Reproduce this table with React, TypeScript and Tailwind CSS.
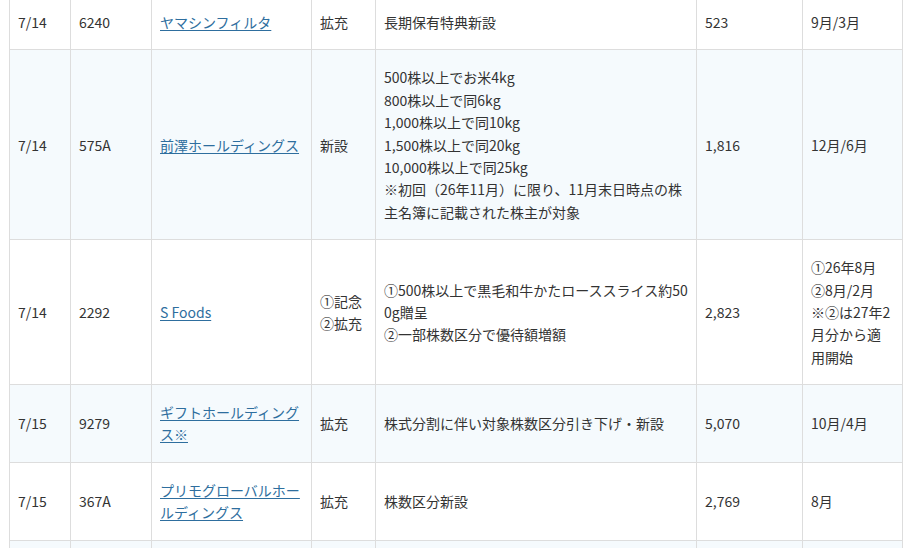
import React from "react";

type Row = {
  date: string;
  code: string;
  name: string;
  kind: React.ReactNode;
  detail: React.ReactNode;
  price: string;
  month: React.ReactNode;
};

const rows: Row[] = [
  {
    date: "7/14",
    code: "6240",
    name: "ヤマシンフィルタ",
    kind: "拡充",
    detail: "長期保有特典新設",
    price: "523",
    month: "9月/3月",
  },
  {
    date: "7/14",
    code: "575A",
    name: "前澤ホールディングス",
    kind: "新設",
    detail: (
      <>
        500株以上でお米4kg
        <br />
        800株以上で同6kg
        <br />
        1,000株以上で同10kg
        <br />
        1,500株以上で同20kg
        <br />
        10,000株以上で同25kg
        <br />
        ※初回（26年11月）に限り、11月末日時点の株主名簿に記載された株主が対象
      </>
    ),
    price: "1,816",
    month: "12月/6月",
  },
  {
    date: "7/14",
    code: "2292",
    name: "S Foods",
    kind: (
      <>
        ①記念
        <br />
        ②拡充
      </>
    ),
    detail: (
      <>
        ①500株以上で黒毛和牛かたローススライス約500g贈呈
        <br />
        ②一部株数区分で優待額増額
      </>
    ),
    price: "2,823",
    month: (
      <>
        ①26年8月
        <br />
        ②8月/2月
        <br />
        ※②は27年2月分から適用開始
      </>
    ),
  },
  {
    date: "7/15",
    code: "9279",
    name: "ギフトホールディングス※",
    kind: "拡充",
    detail: "株式分割に伴い対象株数区分引き下げ・新設",
    price: "5,070",
    month: "10月/4月",
  },
  {
    date: "7/15",
    code: "367A",
    name: "プリモグローバルホールディングス",
    kind: "拡充",
    detail: "株数区分新設",
    price: "2,769",
    month: "8月",
  },
];

const td = "border border-[#dddddd] px-2 py-4 align-middle break-all";

export default function App() {
  return (
    <div className="h-screen overflow-hidden bg-white font-['Noto_Sans_CJK_JP',sans-serif] text-[14px] leading-[1.6] text-[#333333]">
      <div className="pl-[9px] -mt-[6px]">
        <table className="table-fixed border-collapse w-[893px] text-left">
          <colgroup>
            <col className="w-[61px]" />
            <col className="w-[81px]" />
            <col className="w-[160px]" />
            <col className="w-[64px]" />
            <col className="w-[321px]" />
            <col className="w-[106px]" />
            <col className="w-[100px]" />
          </colgroup>
          <tbody>
            {rows.map((r, i) => (
              <tr key={i} className={i % 2 === 1 ? "bg-[#f5fafd]" : "bg-white"}>
                <td className={td}>{r.date}</td>
                <td className={td}>{r.code}</td>
                <td className={td}>
                  <a href="#" className="text-[#2e6e9e] underline underline-offset-2">
                    {r.name}
                  </a>
                </td>
                <td className={td}>{r.kind}</td>
                <td className={td}>{r.detail}</td>
                <td className={td}>{r.price}</td>
                <td className={td}>{r.month}</td>
              </tr>
            ))}
            {/* 次の行（画面外） */}
            <tr className="bg-[#f5fafd]">
              {Array.from({ length: 7 }).map((_, j) => (
                <td key={j} className={`${td} h-[56px]`}></td>
              ))}
            </tr>
          </tbody>
        </table>
      </div>
    </div>
  );
}
